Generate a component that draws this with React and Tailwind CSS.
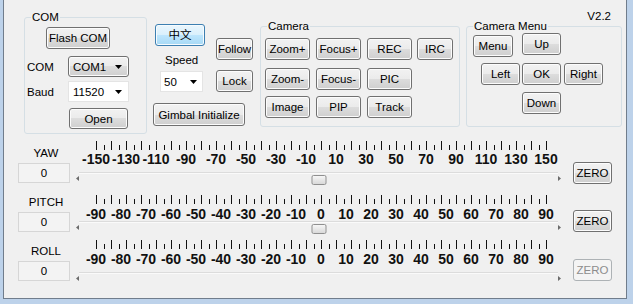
const btnBase =
  'flex items-center justify-center rounded-[3px] border border-[#707070] bg-[linear-gradient(to_bottom,#f2f2f2_0%,#ebebeb_50%,#dddddd_50%,#cfcfcf_100%)] shadow-[inset_0_0_0_1px_#fcfcfc] text-black'

function Btn({ children, className = '' }) {
  return <button className={`${btnBase} ${className}`}>{children}</button>
}

function Arrow() {
  return (
    <svg width="7" height="4" className="block shrink-0">
      <polygon points="0,0 7,0 3.5,4" fill="#000" />
    </svg>
  )
}

function Group({ title, className = '', children }) {
  return (
    <div className={`flex flex-col rounded-[3px] border border-[#d5dfe5] ${className}`}>
      <span className="self-start -mt-[8px] ml-[6px] px-[1px] h-[14px] bg-[#f0f0f0]">{title}</span>
      {children}
    </div>
  )
}

function Ticks() {
  const ticks = Array.from({ length: 61 }, (_, i) => i)
  return (
    <svg width="452" height="9" className="block ml-[22px]">
      {ticks.map((i) => {
        const x = Math.round(i * 7.5) + 0.5
        return (
          <line
            key={i}
            x1={x}
            x2={x}
            y1={i % 2 === 0 ? 0 : 4}
            y2={9}
            stroke="#111"
            strokeWidth="1"
            shapeRendering="crispEdges"
          />
        )
      })}
    </svg>
  )
}

function Scale({ labels, cell, className = '' }) {
  return (
    <div className={`flex h-[13px] leading-[13px] font-bold text-[14px] text-[#111] ${className}`}>
      {labels.map((l) => (
        <span key={l} className={`flex justify-center shrink-0 whitespace-nowrap ${cell}`}>
          {l}
        </span>
      ))}
    </div>
  )
}

function Track({ thumb = true, className = '' }) {
  return (
    <div className={`ml-[2px] w-[485px] h-[14px] flex ${className}`}>
      <svg width="3" height="5" className="block mt-[4px] shrink-0">
        <polygon points="3,0 3,5 0,2.5" fill="#6b6b6b" />
      </svg>
      <div className="relative flex-1 h-[2px] border-t border-t-[#dcdcdc] border-b border-b-[#fafafa]">
        {thumb && (
          <div className="absolute top-[2px] left-1/2 -translate-x-1/2 w-[15px] h-[10px] rounded-[2px] border border-[#8f8f8f] bg-[linear-gradient(to_bottom,#f6f6f6,#d9d9d9)]" />
        )}
      </div>
      <svg width="3" height="5" className="block mt-[4px] shrink-0">
        <polygon points="0,0 0,5 3,2.5" fill="#6b6b6b" />
      </svg>
    </div>
  )
}

function ValueBox({ className = '' }) {
  return (
    <div className={`h-[20px] w-[52px] flex items-center justify-center border border-[#d6d6d6] bg-[#f3f3f3] ${className}`}>
      0
    </div>
  )
}

const yaw = Array.from({ length: 16 }, (_, i) => -150 + i * 20)
const deg = Array.from({ length: 19 }, (_, i) => -90 + i * 10)

export default function App() {
  return (
    <div className="w-[633px] h-[304px] bg-[#bdd2ea] font-['Liberation_Sans',Arial,sans-serif] text-[11.5px] leading-[14px] text-black">
      <div className="ml-[3px] w-[624px] h-[299px] bg-[#f0f0f0] border-l border-r border-b border-[#707d8c] flex flex-col">
        {/* top controls */}
        <div className="flex h-[134px] shrink-0">
          <Group title="COM" className="ml-[20px] mt-[17px] w-[123px] h-[117px]">
            <Btn className="ml-[21px] mt-[3px] w-[64px] h-[22px]">Flash COM</Btn>
            <div className="flex items-center mt-[7px]">
              <span className="w-[43px] pl-[2px]">COM</span>
              <div className={`${btnBase} !justify-between w-[61px] h-[21px] pl-[4px] pr-[6px]`}>
                <span>COM1</span>
                <Arrow />
              </div>
            </div>
            <div className="flex items-center mt-[4px]">
              <span className="w-[43px] pl-[2px]">Baud</span>
              <div className="flex items-center justify-between w-[61px] h-[21px] pl-[4px] pr-[6px] bg-white border border-[#e4e4e4]">
                <span>11520</span>
                <Arrow />
              </div>
            </div>
            <Btn className="ml-[44px] mt-[6px] w-[59px] h-[21px]">Open</Btn>
          </Group>

          <div className="ml-[6px] w-[100px] flex flex-col">
            <div className="flex">
              <div className="w-[63px] flex flex-col">
                <button className="ml-[2px] mt-[24px] w-[50px] h-[22px] flex items-center justify-center rounded-[3px] border border-[#3c7fb1] bg-[linear-gradient(to_bottom,#eaf6fd_0%,#d9f0fc_50%,#bee6fd_50%,#a7d9f5_100%)] shadow-[inset_0_0_0_1px_#f6fbfe] font-['Liberation_Sans','Noto_Sans_CJK_SC',sans-serif]">
                  中文
                </button>
                <span className="ml-[12px] mt-[7px] h-[14px]">Speed</span>
                <div className="ml-[7px] mt-[4px] flex items-center justify-between w-[43px] h-[21px] pl-[3px] pr-[5px] bg-white border border-[#e4e4e4]">
                  <span>50</span>
                  <Arrow />
                </div>
              </div>
              <div className="flex flex-col">
                <Btn className="mt-[38px] w-[37px] h-[22px]">Follow</Btn>
                <Btn className="mt-[10px] w-[37px] h-[22px]">Lock</Btn>
              </div>
            </div>
            <Btn className="mt-[11px] w-[92px] h-[23px]">Gimbal Initialize</Btn>
          </div>

          <Group title="Camera" className="ml-[7px] mt-[26px] w-[200px] h-[101px]">
            <div className="flex ml-[4px] mt-[5px]">
              <Btn className="w-[45px] h-[22px]">Zoom+</Btn>
              <Btn className="ml-[6px] w-[45px] h-[22px]">Focus+</Btn>
              <Btn className="ml-[6px] w-[45px] h-[22px]">REC</Btn>
              <Btn className="ml-[5px] w-[36px] h-[22px]">IRC</Btn>
            </div>
            <div className="flex ml-[4px] mt-[8px]">
              <Btn className="w-[45px] h-[22px]">Zoom-</Btn>
              <Btn className="ml-[6px] w-[45px] h-[22px]">Focus-</Btn>
              <Btn className="ml-[6px] w-[45px] h-[22px]">PIC</Btn>
            </div>
            <div className="flex ml-[4px] mt-[6px]">
              <Btn className="w-[45px] h-[22px]">Image</Btn>
              <Btn className="ml-[6px] w-[45px] h-[22px]">PIP</Btn>
              <Btn className="ml-[6px] w-[45px] h-[22px]">Track</Btn>
            </div>
          </Group>

          <div className="ml-[6px] w-[156px] flex flex-col">
            <span className="mt-[9px] h-[14px] pr-[11px] text-right">V2.2</span>
            <Group title="Camera Menu" className="mt-[3px] w-[156px] h-[101px]">
              <div className="flex items-start">
                <Btn className="ml-[6px] mt-[2px] w-[40px] h-[22px]">Menu</Btn>
                <Btn className="ml-[9px] w-[39px] h-[22px]">Up</Btn>
              </div>
              <div className="flex mt-[6px]">
                <Btn className="ml-[14px] w-[39px] h-[22px]">Left</Btn>
                <Btn className="ml-[2px] w-[39px] h-[22px]">OK</Btn>
                <Btn className="ml-[3px] w-[39px] h-[22px]">Right</Btn>
              </div>
              <Btn className="ml-[55px] mt-[7px] w-[39px] h-[22px]">Down</Btn>
            </Group>
          </div>
        </div>

        {/* sliders */}
        <div className="flex pl-[14px]">
          <div className="w-[52px] flex flex-col">
            <span className="mt-[12px] h-[14px] pl-[4px] text-center">YAW</span>
            <ValueBox className="mt-[3px]" />
            <span className="mt-[12px] h-[14px] pl-[4px] text-center">PITCH</span>
            <ValueBox className="mt-[3px]" />
            <span className="mt-[12px] h-[14px] pl-[4px] text-center">ROLL</span>
            <ValueBox className="mt-[3px]" />
          </div>

          <div className="ml-[4px] w-[490px] flex flex-col">
            <div className="mt-[7px]">
              <Ticks />
            </div>
            <Scale labels={yaw} cell="w-[30px]" className="mt-[3px] ml-[7px]" />
            <Track className="mt-[6px]" />
            <div className="mt-[9px]">
              <Ticks />
            </div>
            <Scale labels={deg} cell="w-[25px]" className="mt-[4px] ml-[9.5px]" />
            <Track />
            <div className="mt-[5px]">
              <Ticks />
            </div>
            <Scale labels={deg} cell="w-[25px]" className="mt-[4px] ml-[9.5px]" />
            <Track thumb={false} className="mt-[6px]" />
          </div>

          <div className="ml-[9px] w-[39px] flex flex-col">
            <Btn className="mt-[28px] w-[39px] h-[22px]">ZERO</Btn>
            <Btn className="mt-[26px] w-[39px] h-[22px]">ZERO</Btn>
            <div className="mt-[27px] w-[39px] h-[22px] flex items-center justify-center rounded-[3px] border border-[#adb2b5] bg-[#f4f4f4] text-[#8d8d8d]">
              ZERO
            </div>
          </div>
        </div>
      </div>
    </div>
  )
}
